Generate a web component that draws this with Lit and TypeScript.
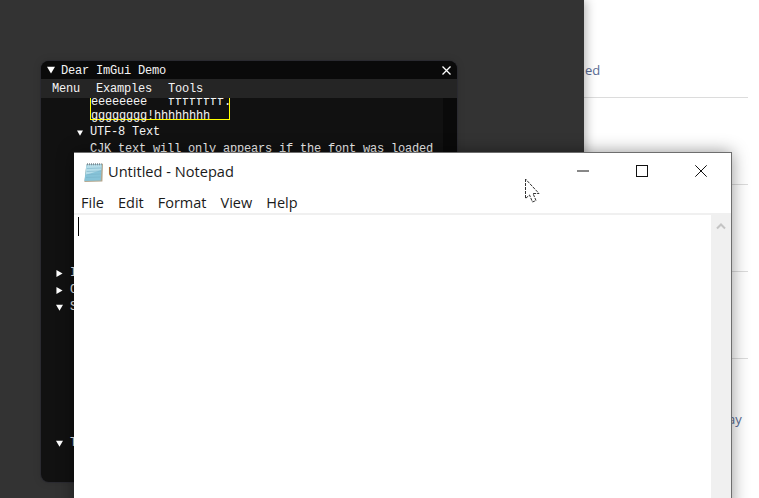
import { LitElement, html, css } from "lit";
import { customElement } from "lit/decorators.js";

const triDown = (size: number) => html`<svg class="tri" viewBox="0 0 8 8" width=${size} height=${size}><path d="M0 .8H8L4 7.6Z" fill="#fff"/></svg>`;
const triRight = html`<svg class="tri" viewBox="0 0 8 8" width="7" height="7"><path d="M.5 0V8L7.5 4Z" fill="#fff"/></svg>`;

@customElement("app-root")
export class AppRoot extends LitElement {
  static styles = css`
    :host { display: block; position: relative; width: 759px; height: 498px; overflow: hidden; background: #fff; }
    .page { position: absolute; inset: 0; background: #fff; font-family: "Open Sans", sans-serif; }
    .rule { position: absolute; left: 584px; width: 164px; height: 1px; background: #dcdcdc; }
    .r1 { top: 97px; } .r2 { top: 184px; } .r3 { top: 271px; } .r4 { top: 358px; }
    .frag { position: absolute; font-size: 13px; line-height: 18px; color: #5a6c94; }
    .f1 { left: 585px; top: 61px; } .f2 { left: 728px; top: 410px; }
    .dark { position: absolute; left: 0; top: 0; width: 584px; height: 498px; background: #333333; box-shadow: 2px 0 10px rgba(0,0,0,.3); }
    .imgui {
      position: absolute; left: 41px; top: 61px; width: 416px; height: 421px; box-sizing: border-box;
      display: flex; flex-direction: column; background: #111111; border-radius: 8px; overflow: hidden;
      font-family: "Liberation Mono", monospace; font-size: 12px; letter-spacing: -.2px; color: #f4f4f4;
      box-shadow: 0 0 0 1px #2a2a30, 0 0 8px rgba(0,0,0,.15);
    }
    .ititle { height: 18px; flex: none; background: #0a0a0a; display: flex; align-items: center; padding: 0 6px 0 6px; gap: 6px; line-height: 18px; }
    .ititle span { flex: 1; position: relative; top: 1px; }
    .imenu { height: 19px; flex: none; box-sizing: border-box; background: #252525; display: flex; gap: 16px; padding: 1px 0 0 11px; line-height: 19px; }
    .ibody { flex: 1; display: flex; min-height: 0; }
    .icontent { flex: 1; position: relative; overflow: hidden; display: flex; flex-direction: column; }
    .iscroll { width: 14px; flex: none; background: #0a0a0a; }
    .selbox { margin: -4px 0 0 49px; padding-top: 1px; width: 140px; height: 26px; box-sizing: border-box; border: 1px solid #ffff00; border-top: 0; line-height: 14px; white-space: pre; flex: none; }
    .selbox div { height: 14px; }
    .row { display: flex; align-items: center; height: 17px; line-height: 17px; white-space: pre; flex: none; }
    .lv2 { padding-left: 36px; gap: 7px; margin-top: 4px; }
    .lv3 { padding-left: 49px; }
    .lv1 { padding-left: 15px; gap: 7px; position: absolute; left: 0; }
    .notepad {
      position: absolute; left: 74px; top: 152px; width: 658px; height: 360px; box-sizing: border-box;
      background: #fff; border: 1px solid #6e6e6e; border-left: 0; display: flex; flex-direction: column;
      box-shadow: 0 0 16px rgba(0,0,0,.42); font-family: "Open Sans", sans-serif; color: #1a1a1a;
    }
    .ntitle { height: 38px; flex: none; display: flex; align-items: center; padding: 0 1px 0 9px; font-size: 14.6px; }
    .ntitle .name { flex: 1; margin: -2px 0 0 4px; }
    .ctrl { width: 59px; height: 38px; display: flex; align-items: center; justify-content: center; flex: none; margin-top: -2px; }
    .nmenu { height: 22px; flex: none; display: flex; gap: 14px; padding: 2px 0 0 7px; box-sizing: border-box; font-size: 14.5px; line-height: 20px; align-items: center; }
    .nsep { height: 2px; flex: none; background: #f0f0f0; }
    .nbody { flex: 1; display: flex; min-height: 0; }
    .edit { flex: 1; position: relative; }
    .caret { width: 1px; height: 19px; background: #000; margin: 2px 0 0 4px; }
    .nscroll { width: 20px; flex: none; background: #f0f0f0; display: flex; justify-content: center; padding-top: 8px; box-sizing: border-box; }
    .cursor { position: absolute; left: 524px; top: 178px; }
  `;

  render() {
    return html`
      <div class="page">
        <div class="rule r1"></div><div class="rule r2"></div><div class="rule r3"></div><div class="rule r4"></div>
        <div class="frag f1">ed</div>
        <div class="frag f2">ay</div>
        <div class="dark"></div>
        <div class="imgui">
          <div class="ititle">${triDown(8)}<span>Dear ImGui Demo</span>
            <svg viewBox="0 0 9 9" width="9" height="9"><path d="M.5.5l8 8M8.5.5l-8 8" stroke="#fff" stroke-width="1.3"/></svg>
          </div>
          <div class="imenu"><span>Menu</span><span>Examples</span><span>Tools</span></div>
          <div class="ibody">
            <div class="icontent">
              <div class="selbox"><div>eeeeeeee   ffffffff.</div><div>gggggggg!hhhhhhhh</div></div>
              <div class="row lv2">${triDown(6)}<span>UTF-8 Text</span></div>
              <div class="row lv3">CJK text will only appears if the font was loaded</div>
              <div class="row lv1" style="top:167px">${triRight}<span>I</span></div>
              <div class="row lv1" style="top:184px">${triRight}<span>C</span></div>
              <div class="row lv1" style="top:201px">${triDown(7)}<span>S</span></div>
              <div class="row lv1" style="top:337px">${triDown(7)}<span>T</span></div>
            </div>
            <div class="iscroll"></div>
          </div>
        </div>
        <div class="notepad">
          <div class="ntitle">
            <svg width="21" height="21" viewBox="0 0 21 21">
              <path d="M3.4 2.5 20 1.8 19.4 19.6 1.4 20Z" fill="#b4a78e"/>
              <path d="M3.4 2.5 18.8 2 17.8 18.6 1.4 19Z" fill="#86c3d8"/>
              <path d="M3.4 3 18.6 2.4 18.2 8 2.8 13Z" fill="#b5dde9"/>
              <path d="M3.8 6.5l14.4-.5M3.6 9.5l14.4-.5M3.3 12.5l14.4-.5M3 15.5l14.4-.5" stroke="#78b2c7" stroke-width=".6"/>
              <path d="M4 2.2h14.6" stroke="#7d8a94" stroke-width="2" stroke-dasharray="1 1"/>
            </svg>
            <span class="name">Untitled - Notepad</span>
            <div class="ctrl"><svg width="12" height="2" viewBox="0 0 12 2"><path d="M0 1h12" stroke="#111"/></svg></div>
            <div class="ctrl"><svg width="12" height="12" viewBox="0 0 12 12"><rect x=".5" y=".5" width="11" height="11" fill="none" stroke="#111"/></svg></div>
            <div class="ctrl"><svg width="12" height="12" viewBox="0 0 12 12"><path d="M.3.3l11.4 11.4M11.7.3.3 11.7" stroke="#111"/></svg></div>
          </div>
          <div class="nmenu"><span>File</span><span>Edit</span><span>Format</span><span>View</span><span>Help</span></div>
          <div class="nsep"></div>
          <div class="nbody">
            <div class="edit"><div class="caret"></div></div>
            <div class="nscroll"><svg width="10" height="7" viewBox="0 0 10 7"><path d="M1 5.5 5 1.5 9 5.5" fill="none" stroke="#c4c4c4" stroke-width="2"/></svg></div>
          </div>
        </div>
        <svg class="cursor" width="17" height="26" viewBox="0 0 17 26">
          <path d="M1.5 1V20.5L5.5 17 8.5 24 12 22.5 9 15.5 15 15.5Z" fill="#fff" stroke="#333" stroke-width="1" stroke-dasharray="3 1"/>
        </svg>
      </div>
    `;
  }
}
